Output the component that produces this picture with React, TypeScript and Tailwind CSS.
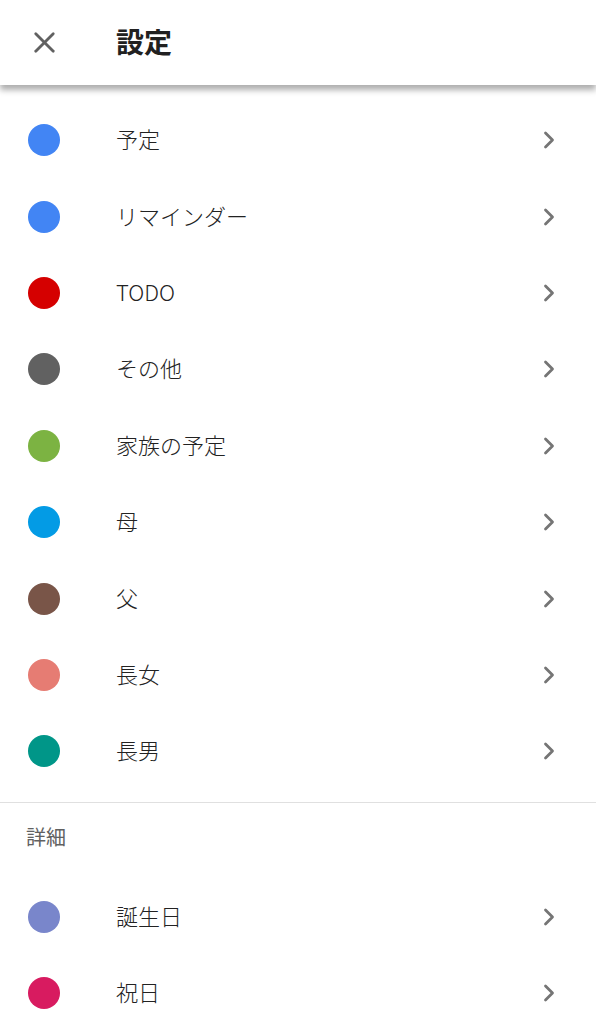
import { X, ChevronRight } from 'lucide-react';

type Item = { label: string; color: string };

const calendars: Item[] = [
  { label: '予定', color: 'bg-[#4285f4]' },
  { label: 'リマインダー', color: 'bg-[#4285f4]' },
  { label: 'TODO', color: 'bg-[#d50000]' },
  { label: 'その他', color: 'bg-[#616161]' },
  { label: '家族の予定', color: 'bg-[#7cb342]' },
  { label: '母', color: 'bg-[#039be5]' },
  { label: '父', color: 'bg-[#795548]' },
  { label: '長女', color: 'bg-[#e67c73]' },
  { label: '長男', color: 'bg-[#009688]' },
];

const details: Item[] = [
  { label: '誕生日', color: 'bg-[#7986cb]' },
  { label: '祝日', color: 'bg-[#d81b60]' },
];

function Row({ item }: { item: Item }) {
  return (
    <div className="flex h-[76.4px] items-center pl-[28px] pr-[33px]">
      <span className={`h-[32px] w-[32px] shrink-0 rounded-full ${item.color}`} />
      <span className="ml-[56px] flex-1 pb-[3px] text-[22px] font-light text-[#222]">{item.label}</span>
      <ChevronRight className="h-[28px] w-[28px] text-[#757575]" strokeWidth={2.4} />
    </div>
  );
}

export default function App() {
  return (
    <div
      className="min-h-[1024px] w-full overflow-hidden bg-white"
      style={{ fontFamily: '"Noto Sans CJK JP", "Noto Sans", sans-serif' }}
    >
      <header className="relative z-10 flex h-[85px] items-center bg-white shadow-[0_5px_6px_rgba(0,0,0,0.32)]">
        <X className="ml-[27px] h-[35px] w-[35px] text-[#616161]" strokeWidth={1.9} />
        <h1 className="ml-[54px] pb-[4px] text-[28px] font-bold text-[#212121]">設定</h1>
      </header>

      <div className="pt-[17px] pb-[12px]">
        {calendars.map((c) => (
          <Row key={c.label} item={c} />
        ))}
      </div>

      <div className="border-t border-[#e0e0e0]" />

      <div className="flex h-[76px] items-start pl-[26px] pt-[19px] text-[20px] text-[#616161]">
        詳細
      </div>

      <div>
        {details.map((c) => (
          <Row key={c.label} item={c} />
        ))}
      </div>
    </div>
  );
}
